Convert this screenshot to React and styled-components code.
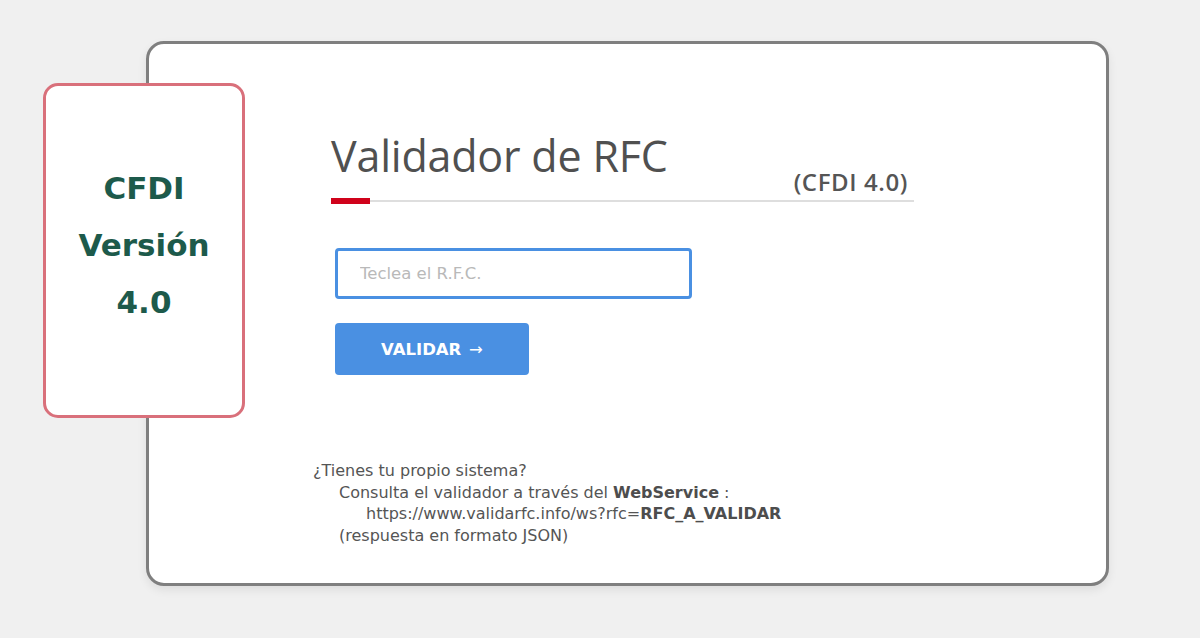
import React from "react"
import styled, { createGlobalStyle } from "styled-components"

const Global = createGlobalStyle`
    html, body {
        margin: 0;
        padding: 0;
        background: #f0f0f0;
    }
    body {
        font-family: "DejaVu Sans", "Open Sans", sans-serif;
    }
`

const Page = styled.main`
    width: 1200px;
    height: 638px;
    box-sizing: border-box;
    padding: 41px 0 0 146px;
`

const Card = styled.section`
    position: relative;
    width: 963px;
    height: 545px;
    box-sizing: border-box;
    background: #fff;
    border: 3px solid #7f7f7f;
    border-radius: 18px;
    box-shadow: 0 4px 10px rgba(0, 0, 0, 0.08);
    padding: 82px 0 0 182px;
`

const Badge = styled.aside`
    position: absolute;
    left: -106px;
    top: 39px;
    width: 202px;
    height: 335px;
    box-sizing: border-box;
    background: #fff;
    border: 3px solid #d9707b;
    border-radius: 15px;
    display: flex;
    flex-direction: column;
    align-items: center;
    justify-content: center;
    padding-bottom: 10px;
`

const BadgeLine = styled.div`
    font-family: "DejaVu Sans", sans-serif;
    font-weight: 700;
    font-size: 31px;
    line-height: 57px;
    color: #1d5a4b;
`

const Heading = styled.header`
    width: 583px;
    display: flex;
    align-items: flex-end;
    justify-content: space-between;
    position: relative;
    border-bottom: 2px solid #dedede;
    padding-bottom: 2px;
    font-family: "Open Sans", sans-serif;
`

const Title = styled.h1`
    margin: 0 0 12px;
    font-size: 43px;
    font-weight: 400;
    color: #505050;
    line-height: 60px;
    letter-spacing: -0.2px;
`

const Sub = styled.span`
    font-size: 24px;
    font-weight: 600;
    color: #555;
    margin: 0 6px 0 0;
    letter-spacing: 0.6px;
`

const Accent = styled.span`
    position: absolute;
    left: 0;
    bottom: -4px;
    width: 39px;
    height: 6px;
    background: #d0021b;
`

const Form = styled.form`
    display: flex;
    flex-direction: column;
    align-items: flex-start;
    gap: 24px;
    margin: 46px 0 0 4px;
`

const Input = styled.input`
    width: 357px;
    height: 51px;
    box-sizing: border-box;
    border: 3px solid #4a90e2;
    border-radius: 4px;
    padding: 0 22px;
    font-family: "DejaVu Sans", sans-serif;
    font-size: 16.5px;
    color: #333;
    &::placeholder {
        color: #b9b9b9;
    }
    &:focus {
        outline: none;
    }
`

const Button = styled.button`
    width: 194px;
    height: 52px;
    border: 0;
    border-radius: 4px;
    background: #4a90e2;
    color: #fff;
    font-family: "DejaVu Sans", sans-serif;
    font-weight: 700;
    font-size: 16.5px;
    cursor: pointer;
`

const Arrow = styled.span`
    font-weight: 400;
    margin-left: 2px;
`

const Info = styled.div`
    margin: 85px 0 0 -18px;
    font-size: 16px;
    line-height: 21.7px;
    color: #555;
`

const Line = styled.div`
    padding-left: ${p => p.indent || 0}px;
`

const Bold = styled.b`
    font-weight: 700;
    color: #4d4d4d;
`

export default function App() {
    return (
        <>
            <Global />
            <Page>
                <Card>
                    <Badge>
                        <BadgeLine>CFDI</BadgeLine>
                        <BadgeLine>Versión</BadgeLine>
                        <BadgeLine>4.0</BadgeLine>
                    </Badge>
                    <Heading>
                        <Title>Validador de RFC</Title>
                        <Sub>(CFDI 4.0)</Sub>
                        <Accent />
                    </Heading>
                    <Form onSubmit={e => e.preventDefault()}>
                        <Input type="text" placeholder="Teclea el R.F.C." />
                        <Button type="submit">VALIDAR <Arrow>→</Arrow></Button>
                    </Form>
                    <Info>
                        <Line>¿Tienes tu propio sistema?</Line>
                        <Line indent={26}>Consulta el validador a través del <Bold>WebService</Bold> :</Line>
                        <Line indent={53}>https://www.validarfc.info/ws?rfc=<Bold>RFC_A_VALIDAR</Bold></Line>
                        <Line indent={26}>(respuesta en formato JSON)</Line>
                    </Info>
                </Card>
            </Page>
        </>
    )
}
